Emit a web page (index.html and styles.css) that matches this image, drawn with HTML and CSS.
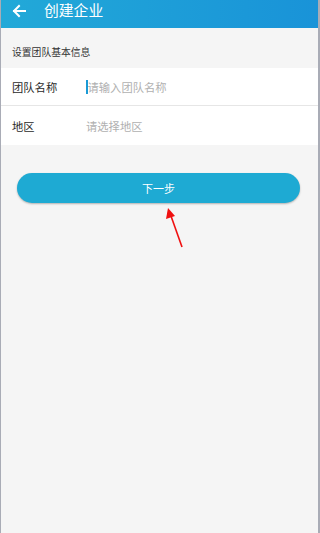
FILE: index.html
```html
<!DOCTYPE html>
<html lang="zh">
<head>
<meta charset="utf-8">
<title>创建企业</title>
<link rel="stylesheet" href="styles.css">
</head>
<body>
<div class="screen">
  <header class="topbar">
    <svg class="back" width="14" height="14" viewBox="0 0 14 14" aria-hidden="true">
      <path d="M13 7H2M7 2L2 7l5 5" fill="none" stroke="#fff" stroke-width="2" stroke-linecap="square" stroke-linejoin="miter"/>
    </svg>
    <span class="title">创建企业</span>
  </header>
  <div class="section-title">设置团队基本信息</div>
  <div class="form">
    <div class="row row-first">
      <span class="label">团队名称</span>
      <span class="field"><span class="cursor"></span>请输入团队名称</span>
    </div>
    <div class="row">
      <span class="label">地区</span>
      <span class="field">请选择地区</span>
    </div>
  </div>
  <div class="btn-wrap">
    <div class="btn">下一步</div>
  </div>
  <svg class="annot" width="40" height="50" viewBox="0 0 40 50" aria-hidden="true">
    <line x1="22" y1="45" x2="11" y2="14" stroke="#f01010" stroke-width="1.6"/>
    <polygon points="8,6 6,17 15,14" fill="#f01010"/>
  </svg>
</div>
</body>
</html>
```
FILE: styles.css
```css
html, body {
  margin: 0;
  padding: 0;
}
body {
  font-family: "Noto Sans CJK SC", "Noto Sans", sans-serif;
  background: #f4f4f4;
}
.screen {
  position: relative;
  width: 320px;
  height: 533px;
  box-sizing: border-box;
  border-left: 1px solid #a9acb6;
  border-right: 2px solid #a9acb6;
  background: #f5f5f5;
  overflow: hidden;
}
.topbar {
  height: 28px;
  background: linear-gradient(to right, #22a9d8, #1993d8);
  display: flex;
  align-items: flex-start;
  padding-top: 1px;
  box-sizing: border-box;
}
.back {
  margin-left: 11px;
  margin-top: 3px;
}
.title {
  margin-left: 18px;
  color: #fff;
  font-size: 14.8px;
  line-height: 18px;
}
.section-title {
  padding: 17px 0 9px 11px;
  font-size: 9.8px;
  line-height: 14px;
  color: #333;
}
.form {
  background: #fff;
}
.row {
  display: flex;
  align-items: center;
  height: 39px;
  box-sizing: border-box;
}
.row-first {
  height: 38px;
  border-bottom: 1px solid #e6e6e6;
}
.label {
  width: 74px;
  padding-left: 11px;
  font-size: 11.3px;
  color: #2a2a2a;
}
.field {
  display: flex;
  align-items: center;
  font-size: 11.3px;
  color: #b0b0b0;
}
.cursor {
  display: inline-block;
  width: 1.5px;
  height: 14px;
  background: #1a9ad6;
}
.btn-wrap {
  padding: 28px 18px 0 16px;
}
.btn {
  height: 30px;
  border-radius: 15px;
  background: #1eaad3;
  box-shadow: 0 1px 2px rgba(0, 0, 0, 0.28);
  color: #fff;
  font-size: 11px;
  display: flex;
  align-items: center;
  justify-content: center;
}
.annot {
  position: absolute;
  left: 159px;
  top: 202px;
}
```
